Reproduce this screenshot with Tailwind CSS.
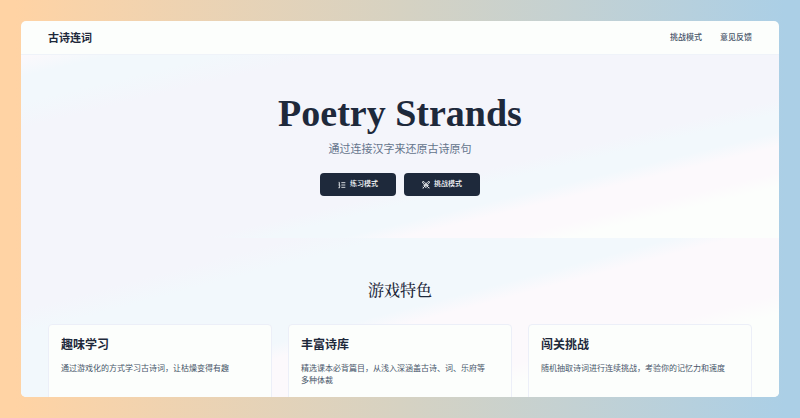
<!DOCTYPE html>
<html lang="zh-CN">
<head>
<meta charset="utf-8">
<meta name="viewport" content="width=device-width, initial-scale=1">
<title>古诗连词</title>
<script src="https://cdn.jsdelivr.net/npm/@tailwindcss/browser@4"></script>
</head>
<body class="h-screen bg-linear-to-r from-[#ffd3a4] from-2% via-[#d6d2c2] to-[#abcfe6] to-98% p-[21px] font-['Liberation_Sans','Noto_Sans_CJK_SC',sans-serif] text-[#1e293b]">
<div class="flex h-full flex-col overflow-hidden rounded-[5px] bg-[#fcfefc]">
  <header class="flex h-[34px] shrink-0 items-center justify-between border-b border-[#eff3f9] px-[27px]">
    <a href="#" class="text-[11px] leading-4 font-bold">古诗连词</a>
    <nav class="flex gap-[18px] text-[8px] leading-4 font-medium text-[#475569]">
      <a href="#challenge">挑战模式</a>
      <a href="#feedback">意见反馈</a>
    </nav>
  </header>
  <main class="min-h-0 flex-1 overflow-hidden">
    <section class="flex h-[183px] flex-col items-center bg-[linear-gradient(to_bottom_right,#fcf9fc_0%,#f2f8fc_6%,#f2f8fc_13%,#f4f5fb_20%,#f4f5fb_62%,#f2f8fc_66%,#f2f8fc_71%,#fcf9fc_75%,#fcf9fc_82%,#fcfefc_86%)] pt-9">
      <h1 class="font-['Liberation_Serif',serif] text-[38px] leading-[44px] font-bold">Poetry Strands</h1>
      <p class="mt-1 text-[11px] leading-5 text-[#64748b]">通过连接汉字来还原古诗原句</p>
      <div class="mt-[14px] flex gap-2">
        <button type="button" class="flex h-[23px] w-[76px] items-center justify-center gap-1 rounded-[4px] bg-[#1e293b] text-[7px] font-medium text-[#f8fafc]">
          <svg class="size-2" viewBox="0 0 24 24" fill="none" stroke="currentColor" stroke-width="2.5" aria-hidden="true"><path d="M10 5h12M10 12h12M10 19h12M2 4h2v6M2 10h4M2 14h4v2l-4 4h4"/></svg>
          练习模式
        </button>
        <button type="button" class="flex h-[23px] w-[76px] items-center justify-center gap-1 rounded-[4px] bg-[#1e293b] text-[7px] font-medium text-[#f8fafc]">
          <svg class="size-2" viewBox="0 0 24 24" fill="none" stroke="currentColor" stroke-width="2.5" aria-hidden="true"><path d="M17 17 2 6V2h4l12 13M12 20l8-8M16 16l6 6M18 22l4-4M7 17 22 6V2h-4L6 15M4 12l8 8M8 16l-6 6M2 18l4 4"/></svg>
          挑战模式
        </button>
      </div>
    </section>
    <section class="bg-[linear-gradient(to_bottom_right,#f4f5fb_0%,#f4f5fb_18%,#f2f8fc_24%,#f2f8fc_43%,#fcf9fc_47%,#fcf9fc_64%,#fcfefc_69%)] px-[27px] pt-10 pb-7">
      <h2 class="text-center font-['Noto_Serif_CJK_SC','Noto_Sans_CJK_SC',serif] text-[16px] leading-6 font-medium">游戏特色</h2>
      <div class="mt-[22px] grid grid-cols-3 gap-4">
        <article class="min-h-[86px] rounded-[4px] border border-[#eceff8] bg-[#fcfefc] p-3">
          <h3 class="text-[12px] leading-4 font-bold">趣味学习</h3>
          <p class="mt-[10px] pr-2 text-[8px] leading-3 text-[#475569]">通过游戏化的方式学习古诗词，让枯燥变得有趣</p>
        </article>
        <article class="min-h-[86px] rounded-[4px] border border-[#eceff8] bg-[#fcfefc] p-3">
          <h3 class="text-[12px] leading-4 font-bold">丰富诗库</h3>
          <p class="mt-[10px] pr-2 text-[8px] leading-3 text-[#475569]">精选课本必背篇目，从浅入深涵盖古诗、词、乐府等多种体裁</p>
        </article>
        <article class="min-h-[86px] rounded-[4px] border border-[#eceff8] bg-[#fcfefc] p-3">
          <h3 class="text-[12px] leading-4 font-bold">闯关挑战</h3>
          <p class="mt-[10px] pr-2 text-[8px] leading-3 text-[#475569]">随机抽取诗词进行连续挑战，考验你的记忆力和速度</p>
        </article>
      </div>
    </section>
  </main>
</div>
</body>
</html>
